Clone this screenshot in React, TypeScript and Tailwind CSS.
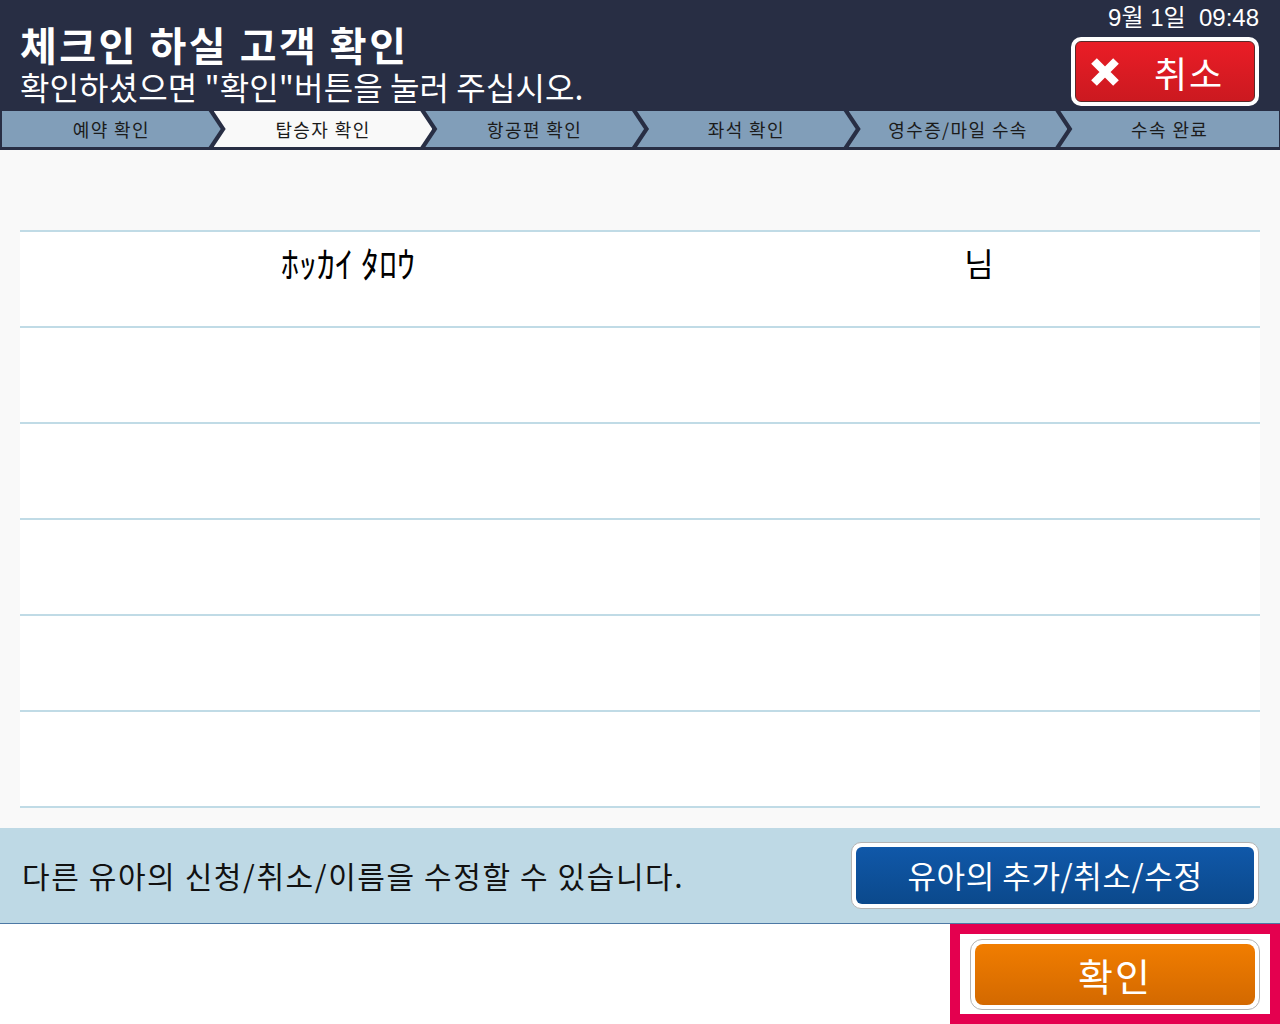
import React from 'react';

const steps = ['예약 확인', '탑승자 확인', '항공편 확인', '좌석 확인', '영수증/마일 수속', '수속 완료'];

const kr = { fontFamily: '"Noto Sans CJK KR", "Noto Sans", sans-serif' };

const App: React.FC = () => {
  return (
    <div className="w-[1280px] h-[1024px] overflow-hidden bg-white" style={kr}>
      {/* header */}
      <header className="bg-[#282e44]">
        <div className="flex h-[111px] justify-between pl-[20px] pr-[21px]">
          <div className="pt-[24px]">
            <h1 className="text-[40px] font-bold leading-[40px] tracking-[2.5px] text-white">체크인 하실 고객 확인</h1>
            <p className="mt-[5px] text-[32px] leading-[34px] tracking-[0.1px] text-white">
              확인하셨으면 "확인"버튼을 눌러 주십시오.
            </p>
          </div>
          <div className="flex flex-col items-end pt-[3px]">
            <div
              className="text-[24px] leading-[30px] text-white"
              style={{ fontFamily: '"Liberation Sans", "Noto Sans CJK KR", sans-serif' }}
            >
              9월 1일&nbsp; 09:48
            </div>
            <button className="mt-[4px] w-[188px] h-[69px] rounded-[10px] bg-white p-[4px]">
              <div className="flex h-full items-center rounded-[6px] border border-[#5a2a2a] bg-gradient-to-b from-[#ea1d26] to-[#cb1920] pl-[14px]">
                <svg width="30" height="28" viewBox="0 0 30 28">
                  <path d="M4 3 L26 25 M26 3 L4 25" stroke="white" strokeWidth="8" />
                </svg>
                <span className="ml-[34px] text-[36px] leading-none tracking-[2px] text-white">취소</span>
              </div>
            </button>
          </div>
        </div>

        {/* step bar */}
        <div className="flex h-[39px] pb-[3px] pl-[2px] pr-[1px]">
          {steps.map((s, i) => {
            const first = i === 0;
            const last = i === steps.length - 1;
            const active = i === 1;
            let clip = '[clip-path:polygon(0_0,calc(100%-12px)_0,100%_50%,calc(100%-12px)_100%,0_100%,12px_50%)]';
            if (first) clip = '[clip-path:polygon(0_0,calc(100%-12px)_0,100%_50%,calc(100%-12px)_100%,0_100%)]';
            if (last) clip = '[clip-path:polygon(0_0,100%_0,100%_100%,0_100%,12px_50%)]';
            return (
              <div
                key={s}
                className={`flex flex-1 items-center justify-center text-[18px] tracking-[1.4px] text-[#1b1b1b] ${clip} ${
                  first ? '' : 'ml-[-7px]'
                } ${active ? 'bg-[#f9f9f9]' : 'bg-[#819eb9]'}`}
              >
                {s}
              </div>
            );
          })}
        </div>
      </header>

      {/* list */}
      <main className="bg-[#f9f9f9] px-[20px] pt-[80px] pb-[20px]">
        {[0, 1, 2, 3, 4, 5].map((i) => (
          <div
            key={i}
            className={`grid h-[96px] grid-cols-[656px_1fr] border-t-2 border-[#c0dbe6] bg-white ${
              i === 5 ? 'h-[98px] border-b-2' : ''
            }`}
          >
            {i === 0 && (
              <>
                <div
                  className="pt-[10px] text-center text-[36px] leading-[40px] text-black"
                  style={{ fontFamily: '"Noto Sans CJK JP", sans-serif' }}
                >
                  ﾎｯｶｲ ﾀﾛｳ
                </div>
                <div className="pl-[22px] pt-[10px] text-center text-[32px] leading-[40px] text-black">님</div>
              </>
            )}
          </div>
        ))}
      </main>

      {/* infant bar */}
      <div className="flex h-[96px] items-center justify-between border-b border-[#4d79a5] bg-[#bed9e5] pl-[22px] pr-[21px]">
        <p className="text-[30px] tracking-[1.6px] text-[#111]">다른 유아의 신청/취소/이름을 수정할 수 있습니다.</p>
        <button className="h-[67px] w-[408px] rounded-[10px] border border-[#b4b4b4] bg-white p-[4px]">
          <div className="flex h-full items-center justify-center rounded-[6px] bg-gradient-to-b from-[#1058a9] to-[#0b498c] text-[31px] tracking-[0.6px] text-white">
            유아의 추가/취소/수정
          </div>
        </button>
      </div>

      {/* confirm */}
      <div className="flex justify-end">
        <div className="h-[100px] w-[330px] border-[10px] border-[#e4004f] bg-white pl-[10px] pt-[5px]">
          <button className="h-[71px] w-[290px] rounded-[12px] border border-[#b4b4b4] bg-white p-[4px]">
            <div className="flex h-full items-center justify-center rounded-[8px] bg-gradient-to-b from-[#f17d00] to-[#d36900] text-[38px] tracking-[2px] text-white">
              확인
            </div>
          </button>
        </div>
      </div>
    </div>
  );
};

export default App;
